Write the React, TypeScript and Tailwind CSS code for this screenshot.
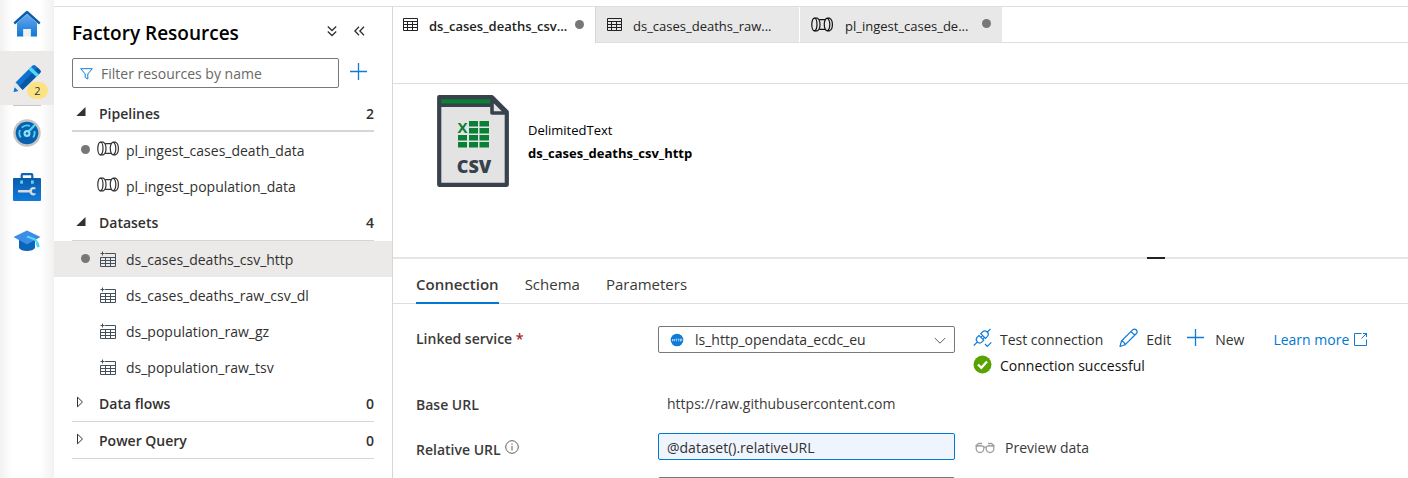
import React from 'react';

function HomeIcon() {
  return (
    <svg width="28" height="28" viewBox="0 0 28 28" aria-hidden="true">
      <defs>
        <linearGradient id="home" x1="0" y1="0" x2="0" y2="1">
          <stop offset="0" stopColor="#6aa9f0" />
          <stop offset="1" stopColor="#0f78d6" />
        </linearGradient>
      </defs>
      <path d="M14 4 24 13v13.5H17.6V19h-7.2v7.500H4V13z" fill="url(#home)" />
      <path d="M10.400 19h7.200v7.500h-7.200z" fill="#f0f0f0" />
      <path d="M13 1.200q1-.8 2 0L27.500 12.500 26 14.400 14 3.800 2 14.400.5 12.500z" fill="#0a5da8" />
    </svg>
  );
}

function PencilIcon() {
  return (
    <svg width="28" height="28" viewBox="0 0 28 28" aria-hidden="true">
      <path d="M2.500 18.500 19 2q2-2 4 0l4 4q1.500 1.500 0 3L9.500 26z" fill="#0f74cf" />
      <path d="M6 22.500 24.500 3.500l2.500 2.500q1.500 1.500 0 3L9.500 26z" fill="#0a58a5" />
      <path d="m15.500 5.500 2.500-2.500 8 7.500-2.500 2.500z" fill="#50d8f5" />
      <path d="M2.500 18.500 9.500 26 .8 27.800z" fill="#e4e4e4" />
      <path d="m1.600 23.300 3.800 3.800-4.900 1z" fill="#0f74cf" />
    </svg>
  );
}

function GaugeIcon() {
  return (
    <svg width="28" height="28" viewBox="0 0 28 28" aria-hidden="true">
      <circle cx="14" cy="14" r="13.700" fill="#c4c4c4" />
      <circle cx="14" cy="14" r="11.300" fill="#0861ae" />
      <g fill="none" stroke="#50d0f2" strokeWidth="1.800">
        <path d="M7.800 18.500a7.600 7.600 0 0 1-.8-7.500M8.800 8.600A7.600 7.600 0 0 1 17 7M21.400 12a7.600 7.600 0 0 1-1.200 6.500" />
        <path d="m15.500 12.600 6-6.400" strokeWidth="2.400" strokeLinecap="round" />
        <circle cx="14" cy="14.500" r="2.400" fill="#0861ae" strokeWidth="2.200" stroke="#8fe2f8" />
      </g>
    </svg>
  );
}

function ToolboxIcon() {
  return (
    <svg width="28" height="28" viewBox="0 0 28 28" aria-hidden="true">
      <defs>
        <linearGradient id="box" x1="0" y1="0" x2="0" y2="1">
          <stop offset="0" stopColor="#0b5ca8" />
          <stop offset="1" stopColor="#0f7bdb" />
        </linearGradient>
      </defs>
      <path d="M8.700 6V2q0-.8.800-.8h9q.8 0 .8.800v4" fill="none" stroke="#0b65b5" strokeWidth="2.200" />
      <rect y="5" width="28" height="23" rx="1" fill="url(#box)" />
      <path d="M7.200 7.500h2.800v3.200H7.200zM18 7.500h2.800v3.200H18z" fill="#50d8f5" />
      <path d="M6 16.900h10.500q1-2.900 4-2.900l2 .6v1.600h-2.800l-.9 2 .9 2h2.800v1.600l-2 .6q-3 0-4-2.900H6q-1.200 0-1.200-1.300T6 16.900" fill="#d6dbe0" />
    </svg>
  );
}

function CapIcon() {
  return (
    <svg width="28" height="28" viewBox="0 0 28 28" aria-hidden="true">
      <path d="M6 13v8q2 3 8 3t8-3v-8z" fill="#0b65b8" />
      <path d="M14 3.500 27.500 10 14 17.500.5 10z" fill="#3b8de6" />
      <path d="m14 9.500 7.500 2.800q3 2 3.500 7.500" fill="none" stroke="#50d8f5" strokeWidth="2.200" />
      <path d="m22.500 16 3.300-.5.9 4.500-2.400.5z" fill="#50d8f5" />
    </svg>
  );
}

function PipelineIcon() {
  return (
    <svg width="22" height="16" viewBox="0 0 22 16" className="shrink-0" fill="none" stroke="currentColor" strokeWidth="1.200" aria-hidden="true">
      <ellipse cx="3.400" cy="7.500" rx="2.600" ry="6.300" />
      <path d="M3.400 1.200h3q2.600 1.300 2.600 6.300t-2.600 6.300h-3" />
      <path d="M8.200 2.600h6.200q-2.400 4.900 0 9.800H8.200" />
      <path d="M14.400 2.600q.7-1.400 1.800-1.400h2.400q2.800 1.300 2.800 6.300t-2.800 6.300h-2.400q-1.100 0-1.800-1.400M16.200 1.200q2.600 1.300 2.600 6.300t-2.600 6.300" />
    </svg>
  );
}

function DatasetIcon() {
  return (
    <svg width="17" height="16" viewBox="0 0 17 16" className="shrink-0" fill="none" stroke="#44505c" aria-hidden="true">
      <path d="M5 2.500h10.500v13H.5v-9h15M.5 9.500h15M.5 12.500h15M5.500 6.500v9M10.500 6.500v9" />
      <path d="M2.500.5v4M.5 2.500h4" />
    </svg>
  );
}

function TableIcon() {
  return (
    <svg width="15" height="14" viewBox="0 0 15 14" className="shrink-0" fill="none" stroke="#222" aria-hidden="true">
      <path d="M.5.500h14v12H.5zM0 3.500h15M0 6.500h15M0 9.500h15M4.500 3v9M9.500 3v9" />
    </svg>
  );
}

function CsvIcon() {
  return (
    <svg width="72" height="92" viewBox="0 0 72 92" aria-hidden="true">
      <path d="M3 2h52l15 15v72H3z" fill="#e3e3e3" />
      <path d="M4 4h50v6H4z" fill="#0a7f36" />
      <path d="M2.200 10.200h52" stroke="#37424d" strokeWidth="3.600" />
      <path d="M2.200 2.200h52.800L69.800 17v72.800H2.200z" fill="none" stroke="#37424d" strokeWidth="4.200" strokeLinejoin="round" />
      <path d="M55 4v14h14z" fill="#e3e3e3" stroke="#37424d" strokeWidth="3.600" strokeLinejoin="round" />
      <g fill="#0a7f36">
        <path d="M32 26h9v5.500h-9zM42.500 26H52v5.500h-9.500zM32 33h9v5.500h-9zM42.500 33H52v5.500h-9.500zM21 40h9v5.500h-9zM32 40h9v5.500h-9zM42.500 40H52v5.500h-9.500zM21 47h9v5.500h-9zM32 47h9v5.500h-9zM42.500 47H52v5.500h-9.500z" />
        <text x="25.500" y="37.500" textAnchor="middle" fontSize="15" fontWeight="700" fontFamily="Open Sans, sans-serif">X</text>
      </g>
      <text x="37" y="78" textAnchor="middle" fontSize="18" fontWeight="800" fill="#37424d" fontFamily="Open Sans, sans-serif">CSV</text>
    </svg>
  );
}

function PlusIcon() {
  return (
    <svg width="18" height="18" viewBox="0 0 18 18" fill="none" stroke="#0f7bd7" strokeWidth="1.300" aria-hidden="true">
      <path d="M8.500 0v17M0 8.500h17" />
    </svg>
  );
}

function PlugIcon() {
  return (
    <svg width="19" height="20" viewBox="0 0 19 20" fill="none" stroke="#0f7bd7" strokeWidth="1.200" aria-hidden="true">
      <path d="m.8 17.500 3.700-3.700M14 4.500 17.500.8M6 7.500 4.300 9.200q-2.200 2.300 0 4.700t4.700 0l1.700-1.700zM7.800 5.700l1.700-1.700q2.400-2.200 4.700 0t0 4.700L12.500 10.400zM7.800 9.300l1.700-1.700M9.800 11.200l1.500-1.500" />
      <path d="m12 16 2.300 2.300 4-4" />
    </svg>
  );
}

function EditIcon() {
  return (
    <svg width="19" height="20" viewBox="0 0 19 20" fill="none" stroke="#0f7bd7" strokeWidth="1.200" strokeLinejoin="round" aria-hidden="true">
      <path d="M1 18.500 2.500 13 13.800 1.700q1.900-1.400 3.500.3t.1 3.500L6.200 16.700zM12 3.500l3.700 3.700M2.500 13q2.700.5 3.700 3.700" />
    </svg>
  );
}

function GlassesIcon() {
  return (
    <svg width="20" height="14" viewBox="0 0 20 14" fill="none" stroke="#a19f9d" strokeWidth="1.300" aria-hidden="true">
      <path d="M1.200 5.500V8q.5 3.500 3.800 3.500T8.800 8V5.500q-3.800-1.500-7.600 0M11.200 5.500V8q.5 3.500 3.800 3.500T18.800 8V5.500q-3.800-1.500-7.600 0M8.800 6.500q1.200-.8 2.400 0M.5 5.300l3-2.800h3.500M19.500 5.300l-3-2.800H13" />
    </svg>
  );
}

function Dot({ className = '' }: { className?: string }) {
  return <span className={`size-[9px] shrink-0 rounded-full bg-[#797775] ${className}`} />;
}

const groups = [
  { name: 'Pipelines', count: 2, kind: 'pipeline', items: ['pl_ingest_cases_death_data', 'pl_ingest_population_data'] },
  {
    name: 'Datasets',
    count: 4,
    kind: 'dataset',
    items: ['ds_cases_deaths_csv_http', 'ds_cases_deaths_raw_csv_dl', 'ds_population_raw_gz', 'ds_population_raw_tsv'],
  },
  { name: 'Data flows', count: 0, kind: 'flow', items: [] },
  { name: 'Power Query', count: 0, kind: 'query', items: [] },
];

const changed = ['pl_ingest_cases_death_data', 'ds_cases_deaths_csv_http'];
const selected = 'ds_cases_deaths_csv_http';

function Rail() {
  return (
    <nav aria-label="Main" className="flex w-[54px] shrink-0 flex-col bg-[linear-gradient(90deg,#f1f1f1,#ffffff_12px,#ffffff_40px,#f1f1f1)]">
      <button aria-label="Home" className="flex h-[51px] items-center justify-center pb-1">
        <HomeIcon />
      </button>
      <button aria-label="Author" className="relative flex h-[54px] items-center justify-center bg-[#ebeae8]">
        <PencilIcon />
        <span className="absolute right-1.5 bottom-1.5 flex h-[17px] w-[21px] items-center justify-center rounded-full bg-[#fbe384] text-[11px] text-[#323130]">2</span>
      </button>
      <div className="mx-[13px] h-px bg-[#c8c6c4]" />
      <button aria-label="Monitor" className="flex h-[54px] items-center justify-center">
        <GaugeIcon />
      </button>
      <button aria-label="Manage" className="flex h-[54px] items-center justify-center">
        <ToolboxIcon />
      </button>
      <button aria-label="Learning center" className="flex h-[54px] items-center justify-center">
        <CapIcon />
      </button>
    </nav>
  );
}

function Resources() {
  return (
    <aside className="w-[339px] shrink-0 border-r border-[#d6d6d6]">
      <div className="flex h-[51px] items-center pr-[27px] pl-[18px]">
        <h1 className="flex-1 text-[19px] font-semibold text-black">Factory Resources</h1>
        <div className="flex gap-[17px] pb-1">
          <button aria-label="Expand all">
            <svg width="10" height="12" viewBox="0 0 10 12" fill="none" stroke="#323130" strokeWidth="1.300">
              <path d="m.8 1.500 4.200 4 4.200-4M.8 6.500l4.200 4 4.200-4" />
            </svg>
          </button>
          <button aria-label="Collapse panel">
            <svg width="11" height="10" viewBox="0 0 11 10" fill="none" stroke="#323130" strokeWidth="1.300">
              <path d="M5 .8.900 5 5 9.200M10 .8 5.900 5 10 9.200" />
            </svg>
          </button>
        </div>
      </div>
      <div className="flex items-center gap-[11px] pr-6 pl-[18px]">
        <label className="flex h-[30px] w-[267px] items-center gap-2 rounded-xs border border-[#7a7876] px-[7px] pt-px">
          <svg width="13" height="12" viewBox="0 0 13 12" fill="none" stroke="#0f7bd7" aria-hidden="true" className="shrink-0">
            <path d="M.7.700h11.600L7.800 6v5L5.200 9.500V6z" />
          </svg>
          <input aria-label="Filter resources" placeholder="Filter resources by name" className="min-w-0 flex-1 outline-none placeholder:text-[#6a6866]" />
        </label>
        <button aria-label="Add resource" className="pb-0.5">
          <PlusIcon />
        </button>
      </div>
      <div className="pt-[7px]">
        {groups.map((g) => (
          <section key={g.name}>
            <button
              className={`mx-[18px] flex h-[37px] w-[302px] items-center border-[#d6d6d6] pt-0.5 text-left font-semibold ${g.kind === 'pipeline' ? 'border-b-2' : 'border-b'}`}
            >
              <span className="w-[27px] pb-1 pl-1">
                {g.items.length ? (
                  <svg width="10" height="9" viewBox="0 0 10 9" aria-hidden="true">
                    <path d="M9.500 0v9H.3z" fill="#323130" />
                  </svg>
                ) : (
                  <svg width="8" height="12" viewBox="0 0 8 12" fill="none" stroke="#323130" aria-hidden="true">
                    <path d="M1.500 1.200v9.600L6.500 6z" />
                  </svg>
                )}
              </span>
              <span className="flex-1">{g.name}</span>
              <span>{g.count}</span>
            </button>
            {g.items.map((item) => (
              <button key={item} className={`flex h-9 w-full items-center pt-0.5 pl-[27px] text-left ${item === selected ? 'bg-[#ebeae8]' : ''}`}>
                <span className="mb-1 flex w-4">{changed.includes(item) && <Dot />}</span>
                <span className="mb-1 flex w-[29px] justify-start">
                  {g.kind === 'pipeline' ? (
                    <PipelineIcon />
                  ) : (
                    <span className="pt-0.5 pl-[3px]">
                      <DatasetIcon />
                    </span>
                  )}
                </span>
                {item}
              </button>
            ))}
          </section>
        ))}
      </div>
    </aside>
  );
}

function EditorTabs() {
  return (
    <div role="tablist" aria-label="Open resources" className="flex h-9 text-[13px] text-[#222]">
      <button role="tab" aria-selected="true" className="flex w-[202px] items-center gap-[11px] pt-0.5 pl-2.5 font-semibold">
        <span className="mb-0.5"><TableIcon /></span>
        <span className="w-[135px] text-left whitespace-nowrap">ds_cases_deaths_csv...</span>
        <Dot className="mb-1" />
      </button>
      <button role="tab" aria-selected="false" className="flex w-[205px] items-center gap-[11px] border-r border-l border-r-white border-b border-b-[#dedede] border-l-[#d6d6d6] bg-[#e8e8e8] pt-0.5 pl-[11px]">
        <span className="mb-0.5"><TableIcon /></span>
        ds_cases_deaths_raw...
      </button>
      <button role="tab" aria-selected="false" className="flex w-[202px] items-center gap-3 border-b border-[#dedede] bg-[#e8e8e8] pt-0.5 pl-[11px]">
        <span className="mb-0.5 text-[#111]"><PipelineIcon /></span>
        <span className="w-[125px] text-left whitespace-nowrap">pl_ingest_cases_de...</span>
        <Dot className="mb-1" />
      </button>
      <div className="flex-1 border-b border-[#dedede]" />
    </div>
  );
}

function ConnectionForm() {
  return (
    <form className="grid grid-cols-[242px_297px_1fr] items-start pt-[22px] pl-[23px]">
      <label htmlFor="linked" className="h-16 pt-[3px] font-semibold text-[#3b3a39]">
        Linked service <span className="text-[#a4262c]">*</span>
      </label>
      <div className="relative">
        <select id="linked" className="h-[27px] w-full appearance-none rounded-xs border border-[#7a7876] bg-white pl-9 text-[#323130]">
          <option>ls_http_opendata_ecdc_eu</option>
        </select>
        <svg width="14" height="14" viewBox="0 0 14 14" aria-hidden="true" className="pointer-events-none absolute top-[7px] left-3">
          <circle cx="7" cy="7" r="6.300" fill="#0f7bd7" />
          <path d="M2.500 6v2.300m0-1.200h1.800M4.500 6v2.300M5.500 6.200h1.800m-.9 0v2.200M8 6.200h1.500m-.8 0v2.200M10.500 8.500V6h1.300v1.400h-1.300" stroke="#d7ebff" strokeWidth=".7" fill="none" />
        </svg>
        <svg width="12" height="8" viewBox="0 0 12 8" fill="none" stroke="#605e5c" aria-hidden="true" className="pointer-events-none absolute top-[11px] right-[9px]">
          <path d="m.8 1 5.200 5.200L11.200 1" />
        </svg>
      </div>
      <div className="pl-[18px]">
        <div className="flex h-[27px] items-center text-[#323130]">
          <button type="button" className="mr-4 flex items-center gap-2"><span className="mb-1"><PlugIcon /></span>Test connection</button>
          <button type="button" className="mr-4 flex items-center gap-2"><span className="mb-1"><EditIcon /></span>Edit</button>
          <button type="button" className="mr-[29px] flex items-center gap-2.5"><span className="mb-1"><PlusIcon /></span>New</button>
          <a href="#learn" className="flex items-center gap-1 text-[#0078d4]">
            Learn more
            <svg width="15" height="15" viewBox="0 0 15 15" fill="none" stroke="#0f7bd7" aria-hidden="true">
              <path d="M8.500 1.500h-7v12h12v-6M10 1.500h3.500V5M13.500 1.500 8.500 6.500" />
            </svg>
          </a>
        </div>
        <p role="status" className="flex h-6 items-center gap-2 pt-px text-[#111]">
          <svg width="19" height="19" viewBox="0 0 19 19" aria-hidden="true" className="mb-0.5">
            <circle cx="9.500" cy="9.500" r="9" fill="#57a300" />
            <path d="m5 9.500 3.300 3.300L14 6.500" fill="none" stroke="#fff" strokeWidth="2.300" />
          </svg>
          Connection successful
        </p>
      </div>

      <span className="h-[43px] pt-[5px] font-semibold text-[#3b3a39]">Base URL</span>
      <span className="pt-1 pl-[9px] text-[#3b3a39]">https://raw.githubusercontent.com</span>
      <span />

      <div className="flex h-11 gap-1 pt-[7px] font-semibold text-[#3b3a39]">
        <label htmlFor="relative">Relative URL</label>
        <svg width="14" height="14" viewBox="0 0 14 14" fill="none" stroke="#605e5c" role="img" aria-label="Info">
          <circle cx="7" cy="7" r="6.300" />
          <path d="M7 5.800v4.700M7 3.400v1.300" />
        </svg>
      </div>
      <input id="relative" defaultValue="@dataset().relativeURL" className="h-[27px] w-full rounded-xs border border-[#0078d4] bg-[#eff5fe] px-2 pt-px text-[#323130] outline-none" />
      <button type="button" className="flex h-7 items-center gap-2.5 pt-px pl-5 text-[#3b3a39]"><GlassesIcon />Preview data</button>

      <span />
      <input aria-label="Compression type" className="h-[27px] w-full rounded-xs border border-[#7a7876] px-2" />
    </form>
  );
}

export default function App() {
  return (
    <div className="flex h-screen overflow-hidden bg-white font-['Open_Sans','Noto_Sans',sans-serif] text-sm leading-5 text-[#323130]">
      <Rail />
      <div className="mt-1.5 flex min-w-0 flex-1 border-t border-[#dedede]">
        <Resources />
        <main className="min-w-0 flex-1">
          <EditorTabs />
          <div className="h-[41px] border-b border-[#dedede]" />
          <div className="flex h-[173px] gap-[19px] pt-[11px] pl-11">
            <CsvIcon />
            <div className="pt-[25px] text-[13px] text-black">
              <p>DelimitedText</p>
              <p className="mt-[3px] font-bold">ds_cases_deaths_csv_http</p>
            </div>
          </div>
          <div className="flex h-0.5 justify-end bg-[#e5e5e5] pr-[243px]">
            <span className="w-[18px] bg-[#222]" />
          </div>
          <div role="tablist" aria-label="Dataset settings" className="flex h-[45px] items-end gap-[26px] border-b border-[#dedede] pl-[23px] text-[15px] text-[#3b3a39]">
            <button role="tab" aria-selected="true" className="-mb-px h-9 border-b-2 border-[#0078d4] pb-0.5 font-semibold">Connection</button>
            <button role="tab" aria-selected="false" className="h-9 pb-[3px]">Schema</button>
            <button role="tab" aria-selected="false" className="h-9 pb-[3px]">Parameters</button>
          </div>
          <ConnectionForm />
        </main>
      </div>
    </div>
  );
}
